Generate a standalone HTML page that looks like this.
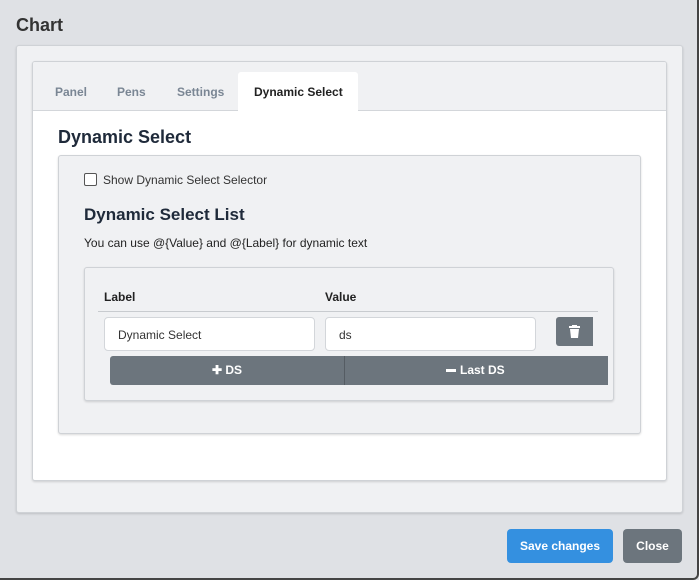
<!DOCTYPE html>
<html><head><style>
*{box-sizing:border-box;margin:0;padding:0}
body{width:699px;height:580px;background:#dfe1e5;font-family:"Liberation Sans",sans-serif;position:relative;overflow:hidden;border-right:2px solid #444;border-bottom:2px solid #444;border-bottom-right-radius:6px}
.a{position:absolute}
</style></head><body>
<div class="a" style="left:16px;top:15px;font-size:18px;font-weight:bold;color:#333">Chart</div>
<div class="a" style="left:16px;top:45px;width:667px;height:468px;background:#f0f1f3;border:1px solid #cfd2d6;border-radius:3px;box-shadow:0 1px 2px rgba(0,0,0,.15)"></div>
<div class="a" style="left:32px;top:61px;width:635px;height:420px;background:#fff;border:1px solid #cfd2d6;border-radius:3px;box-shadow:0 1px 2px rgba(0,0,0,.15);overflow:hidden">
  <div class="a" style="left:0;top:0;width:635px;height:49px;background:#f0f1f3;border-bottom:1px solid #d3d6da"></div>
  <div class="a" style="left:22px;top:23px;font-size:12px;font-weight:bold;color:#7a8694">Panel</div>
  <div class="a" style="left:84px;top:23px;font-size:12px;font-weight:bold;color:#7a8694">Pens</div>
  <div class="a" style="left:144px;top:23px;font-size:12px;font-weight:bold;color:#7a8694">Settings</div>
  <div class="a" style="left:205px;top:10px;width:120px;height:40px;background:#fff;border-radius:3px 3px 0 0"></div>
  <div class="a" style="left:221px;top:23px;font-size:12px;font-weight:bold;color:#222">Dynamic Select</div>
  <div class="a" style="left:25px;top:65px;font-size:18px;font-weight:bold;color:#1f2a3a">Dynamic Select</div>
  <div class="a" style="left:25px;top:93px;width:583px;height:279px;background:#f0f1f3;border:1px solid #cfd2d6;border-radius:3px;box-shadow:0 1px 2px rgba(0,0,0,.15)"></div>
</div>
<div class="a" style="left:84px;top:173px;width:13px;height:13px;border:1px solid #555;border-radius:2px;background:#fff"></div>
<div class="a" style="left:103px;top:173px;font-size:12px;color:#333">Show Dynamic Select Selector</div>
<div class="a" style="left:84px;top:205px;font-size:17px;font-weight:bold;color:#1f2a3a">Dynamic Select List</div>
<div class="a" style="left:84px;top:236px;font-size:12px;color:#222">You can use @{Value} and @{Label} for dynamic text</div>
<div class="a" style="left:84px;top:267px;width:530px;height:134px;background:#f0f1f3;border:1px solid #cfd2d6;border-radius:3px;box-shadow:0 1px 2px rgba(0,0,0,.15)"></div>
<div class="a" style="left:104px;top:290px;font-size:12px;font-weight:bold;color:#222">Label</div>
<div class="a" style="left:325px;top:290px;font-size:12px;font-weight:bold;color:#222">Value</div>
<div class="a" style="left:98px;top:311px;width:500px;height:1px;background:#c8cbcf"></div>
<div class="a" style="left:104px;top:317px;width:211px;height:34px;background:#fff;border:1px solid #d3d6da;border-radius:4px;font-size:12px;color:#333;padding:10px 0 0 13px">Dynamic Select</div>
<div class="a" style="left:325px;top:317px;width:211px;height:34px;background:#fff;border:1px solid #d3d6da;border-radius:4px;font-size:12px;color:#333;padding:10px 0 0 13px">ds</div>
<div class="a" style="left:556px;top:317px;width:37px;height:29px;background:#6c757d;border-radius:3px 0 0 3px">
<svg width="37" height="29"><rect x="13" y="9" width="11" height="2" fill="#fff"/><rect x="16" y="8" width="5" height="2" fill="#fff"/><path d="M14 12h9l-1 9h-7z" fill="#fff"/></svg></div>
<div class="a" style="left:110px;top:356px;width:498px;height:29px;background:#6c757d;border-radius:3px 0 0 3px"></div>
<div class="a" style="left:344px;top:356px;width:1px;height:29px;background:#555c63"></div>
<div class="a" style="left:212px;top:363px;font-size:12px;font-weight:bold;color:#fff">✚ DS</div>
<div class="a" style="left:446px;top:363px;font-size:12px;font-weight:bold;color:#fff"><span style="display:inline-block;width:10px;height:3px;background:#fff;vertical-align:middle;margin-right:4px"></span>Last DS</div>
<div class="a" style="left:507px;top:529px;width:106px;height:34px;background:#3490e0;border-radius:4px;color:#fff;font-size:12px;font-weight:bold;text-align:center;line-height:34px">Save changes</div>
<div class="a" style="left:623px;top:529px;width:59px;height:34px;background:#6c757d;border-radius:4px;color:#fff;font-size:12px;font-weight:bold;text-align:center;line-height:34px">Close</div>
</body></html>
